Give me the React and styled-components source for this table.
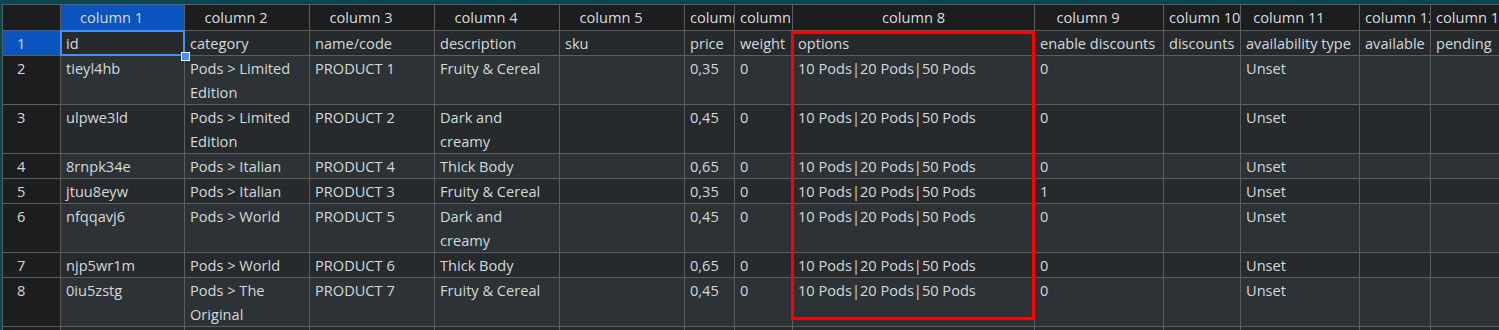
import React from 'react';
import styled, { createGlobalStyle } from 'styled-components';

const GlobalStyle = createGlobalStyle`
  html, body {
    margin: 0;
    padding: 0;
    background: #0b4652;
    overflow: hidden;
  }
`;

const COLS = [123, 124, 124, 124, 124, 49, 57, 241, 128, 76, 118, 70, 72];

const Page = styled.div`
  padding: 4px 0 0 2px;
  font-family: 'Open Sans', 'Noto Sans', sans-serif;
  font-size: 14.6px;
`;

const Sheet = styled.div`
  position: relative;
  width: max-content;
`;

const Grid = styled.div`
  display: grid;
  grid-template-columns: 57px ${COLS.map((w) => `${w}px`).join(' ')};
  gap: 1px;
  background: #5b5d5f;
  border-top: 1px solid #5b5d5f;
  border-left: 1px solid #5b5d5f;
`;

const Corner = styled.div`
  background: #1b1d1f;
  height: 25px;
`;

const HeaderCell = styled.div`
  background: ${(p) => (p.$selected ? '#0b53bf' : '#1b1d1f')};
  color: #dadcdd;
  height: 25px;
  line-height: 25px;
  padding: 0 ${(p) => (p.$centered ? '5px' : '27px')} 0 5px;
  text-align: center;
  white-space: nowrap;
  overflow: hidden;
`;

const RowHead = styled.div`
  background: ${(p) => (p.$selected ? '#0b53bf' : '#1b1d1f')};
  color: #d3d9dc;
  line-height: 24px;
  padding-left: 14px;
`;

const Cell = styled.div`
  position: relative;
  background: ${(p) => (p.$alt ? '#2c3235' : '#262a2d')};
  color: #d3d9dc;
  line-height: 24px;
  min-height: 24px;
  padding: 0 5px;
  overflow: ${(p) => (p.$active ? 'visible' : 'hidden')};
`;

const Selection = styled.div`
  position: absolute;
  inset: -1px;
  border: 2px solid #4a8df5;
  pointer-events: none;
`;

const Handle = styled.div`
  position: absolute;
  right: -6px;
  bottom: -6px;
  width: 7px;
  height: 7px;
  background: #4a8df5;
  border: 1px solid #ffffff;
  z-index: 2;
`;

const Highlight = styled.div`
  position: absolute;
  left: 789px;
  top: 27px;
  width: 244px;
  height: 289px;
  box-sizing: border-box;
  border: 3px solid #ff0000;
  pointer-events: none;
`;

const OPTIONS = '10 Pods|20 Pods|50 Pods';

const rows = [
  ['id', 'category', 'name/code', 'description', 'sku', 'price', 'weight', 'options', 'enable discounts', 'discounts', 'availability type', 'available', 'pending'],
  ['tieyl4hb', 'Pods > Limited Edition', 'PRODUCT 1', 'Fruity & Cereal', '', '0,35', '0', OPTIONS, '0', '', 'Unset', '', ''],
  ['ulpwe3ld', 'Pods > Limited Edition', 'PRODUCT 2', 'Dark and creamy', '', '0,45', '0', OPTIONS, '0', '', 'Unset', '', ''],
  ['8rnpk34e', 'Pods > Italian', 'PRODUCT 4', 'Thick Body', '', '0,65', '0', OPTIONS, '0', '', 'Unset', '', ''],
  ['jtuu8eyw', 'Pods > Italian', 'PRODUCT 3', 'Fruity & Cereal', '', '0,35', '0', OPTIONS, '1', '', 'Unset', '', ''],
  ['nfqqavj6', 'Pods > World', 'PRODUCT 5', 'Dark and creamy', '', '0,45', '0', OPTIONS, '0', '', 'Unset', '', ''],
  ['njp5wr1m', 'Pods > World', 'PRODUCT 6', 'Thick Body', '', '0,65', '0', OPTIONS, '0', '', 'Unset', '', ''],
  ['0iu5zstg', 'Pods > The Original', 'PRODUCT 7', 'Fruity & Cereal', '', '0,45', '0', OPTIONS, '0', '', 'Unset', '', ''],
  ['', '', '', '', '', '', '', '', '', '', '', '', ''],
];

const App = () => (
  <Page>
    <GlobalStyle />
    <Sheet>
      <Grid>
        <Corner />
        {COLS.map((_, i) => (
          <HeaderCell key={i} $selected={i === 0} $centered={i === 7}>
            column {i + 1}
          </HeaderCell>
        ))}
        {rows.map((row, r) => (
          <React.Fragment key={r}>
            <RowHead $selected={r === 0}>{r + 1}</RowHead>
            {row.map((value, c) => {
              const active = r === 0 && c === 0;
              return (
                <Cell key={c} $alt={r % 2 === 1} $active={active}>
                  {value}
                  {active && (
                    <>
                      <Selection />
                      <Handle />
                    </>
                  )}
                </Cell>
              );
            })}
          </React.Fragment>
        ))}
      </Grid>
      <Highlight />
    </Sheet>
  </Page>
);

export default App;
